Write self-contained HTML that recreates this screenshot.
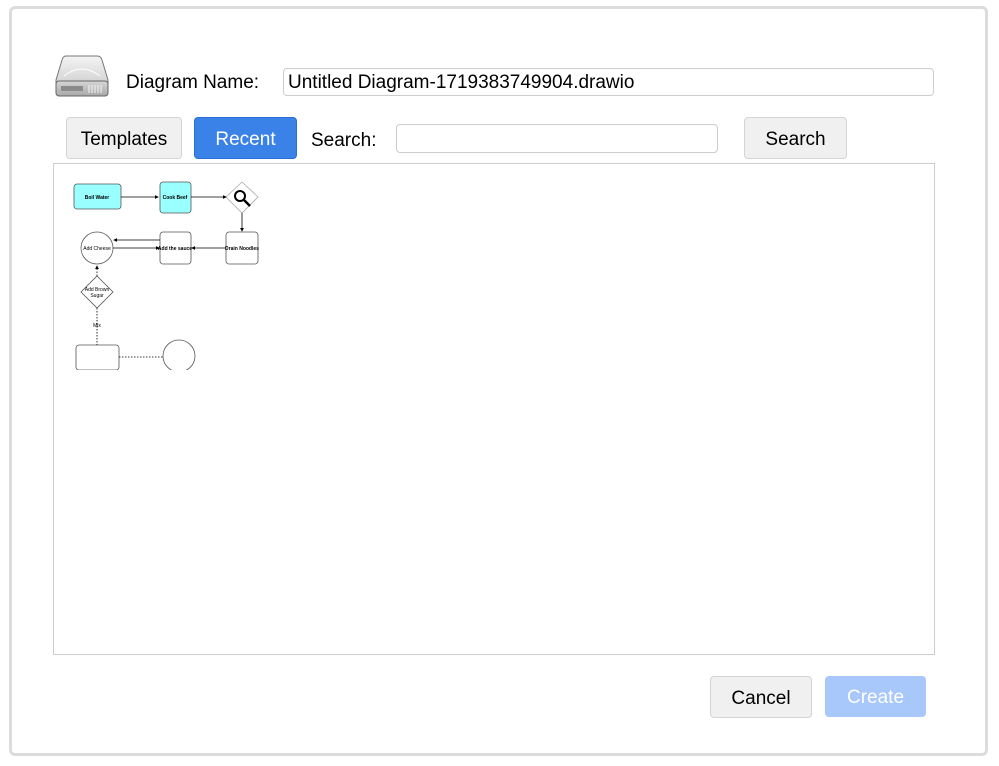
<!DOCTYPE html>
<html><head><meta charset="utf-8"><style>
*{box-sizing:border-box;margin:0;padding:0}
body{width:999px;height:766px;background:#fff;font-family:"Liberation Sans",Arial,sans-serif;position:relative;overflow:hidden}
.dlg{position:absolute;left:9px;top:6px;width:979px;height:750px;border:3px solid #dcdcdc;border-radius:6px;background:#fff}
.abs{position:absolute}
.btn{position:absolute;border:1px solid #d4d4d4;border-radius:4px;background:#f0f0f0;color:#000;font-size:19px;display:flex;align-items:center;justify-content:center;padding-top:3px}
.inp{position:absolute;border:1px solid #ccc;border-radius:4px;background:#fff}
</style></head><body>
<div class="dlg"></div>
<svg class="abs" style="left:54px;top:54px" width="56" height="44">
<defs><linearGradient id="t" x1="0" y1="0" x2="0" y2="1"><stop offset="0" stop-color="#f4f4f4"/><stop offset="1" stop-color="#d2d2d2"/></linearGradient>
<linearGradient id="b" x1="0" y1="0" x2="0" y2="1"><stop offset="0" stop-color="#d6d6d6"/><stop offset="1" stop-color="#a8a8a8"/></linearGradient></defs>
<path d="M12,2H43Q47,2 48,6L54,26V30H2V26L8,6Q9,2 12,2Z" fill="url(#t)" stroke="#777" stroke-width="1"/>
<path d="M10,22Q28,8 46,22" stroke="#fff" fill="none" stroke-width="1"/>
<rect x="2" y="27" width="52" height="15" rx="3" fill="url(#b)" stroke="#666"/>
<rect x="7" y="32" width="22" height="5" fill="#8a8a8a"/>
<g stroke="#f4f4f4" stroke-width="1"><path d="M35,31V39M38,31V39M41,31V39M44,31V39M47,31V39"/></g>
</svg>
<div class="abs" style="left:126px;top:72px;font-size:19px">Diagram Name:</div>
<div class="inp" style="left:283px;top:68px;width:651px;height:28px;font-size:19px;padding:1px 0 0 4px;line-height:25px">Untitled Diagram-1719383749904.drawio</div>
<div class="btn" style="left:66px;top:117px;width:116px;height:42px">Templates</div>
<div class="btn" style="left:194px;top:117px;width:103px;height:42px;background:#3b82e8;border-color:#2a6fd6;color:#fff">Recent</div>
<div class="abs" style="left:311px;top:130px;font-size:19px">Search:</div>
<div class="inp" style="left:396px;top:124px;width:322px;height:29px"></div>
<div class="btn" style="left:744px;top:117px;width:103px;height:42px">Search</div>
<div class="abs" style="left:53px;top:163px;width:882px;height:492px;border:1px solid #ccc;background:#fff"></div>
<svg class="abs" style="left:54px;top:164px" width="880" height="490" font-family="Liberation Sans,Arial,sans-serif">
<defs><marker id="a" markerWidth="5" markerHeight="5" refX="4" refY="2.5" orient="auto"><path d="M0,0L5,2.5L0,5z" fill="#000"/></marker></defs>
<g transform="translate(-54,-164)" stroke="#000" stroke-width="0.8" fill="none">
<rect x="74" y="184" width="47" height="25" rx="3" fill="#99ffff" stroke="#555"/>
<rect x="160" y="182" width="31" height="31" rx="3" fill="#99ffff" stroke="#555"/>
<path d="M242,182L258,197L242,213L226,197Z" stroke="#aaa" fill="#fff"/>
<circle cx="240" cy="196" r="5" stroke-width="2"/><path d="M244,200L250,206" stroke-width="2.5"/>
<rect x="226" y="232" width="32" height="32" rx="3" fill="#fff" stroke="#555"/>
<rect x="160" y="232" width="31" height="32" rx="3" fill="#fff" stroke="#555"/>
<circle cx="97" cy="248" r="16" fill="#fff" stroke="#555"/>
<path d="M97,276L113,292L97,308L81,292Z" fill="#fff" stroke="#555"/>
<rect x="76" y="345" width="43" height="25" rx="3" fill="#fff" stroke="#555"/>
<circle cx="179" cy="356" r="16" fill="#fff" stroke="#555"/>
<path d="M121,197H158" marker-end="url(#a)"/>
<path d="M191,197H226" marker-end="url(#a)"/>
<path d="M242,213V231" marker-end="url(#a)"/>
<path d="M226,248H192" marker-end="url(#a)"/>
<path d="M160,240H114" marker-end="url(#a)"/>
<path d="M113,248H159" marker-end="url(#a)"/>
<path d="M97,276V266" marker-end="url(#a)" stroke-dasharray="1.5,1.5"/>
<path d="M97,308V345" stroke-dasharray="1.5,1.5"/>
<path d="M119,357H163" stroke-dasharray="1.5,1.5"/>
</g>
<g transform="translate(-54,-164)" font-size="5" text-anchor="middle" fill="#000">
<text x="97" y="199" font-weight="bold">Boil Water</text>
<text x="175" y="199" font-weight="bold">Cook Beef</text>
<text x="242" y="250" font-weight="bold">Drain Noodles</text>
<text x="175" y="250" font-weight="bold">Add the sauce</text>
<text x="97" y="250">Add Cheese</text>
<text x="97" y="291">Add Brown</text>
<text x="97" y="297">Sugar</text>
<text x="97" y="327">Mix</text>
</g>
<rect x="0" y="206" width="880" height="284" fill="#fff"/>
</svg>
<div class="btn" style="left:710px;top:676px;width:102px;height:42px">Cancel</div>
<div class="btn" style="left:825px;top:676px;width:101px;height:41px;background:#a8c7fa;border-color:#a8c7fa;color:#fff">Create</div>
</body></html>
